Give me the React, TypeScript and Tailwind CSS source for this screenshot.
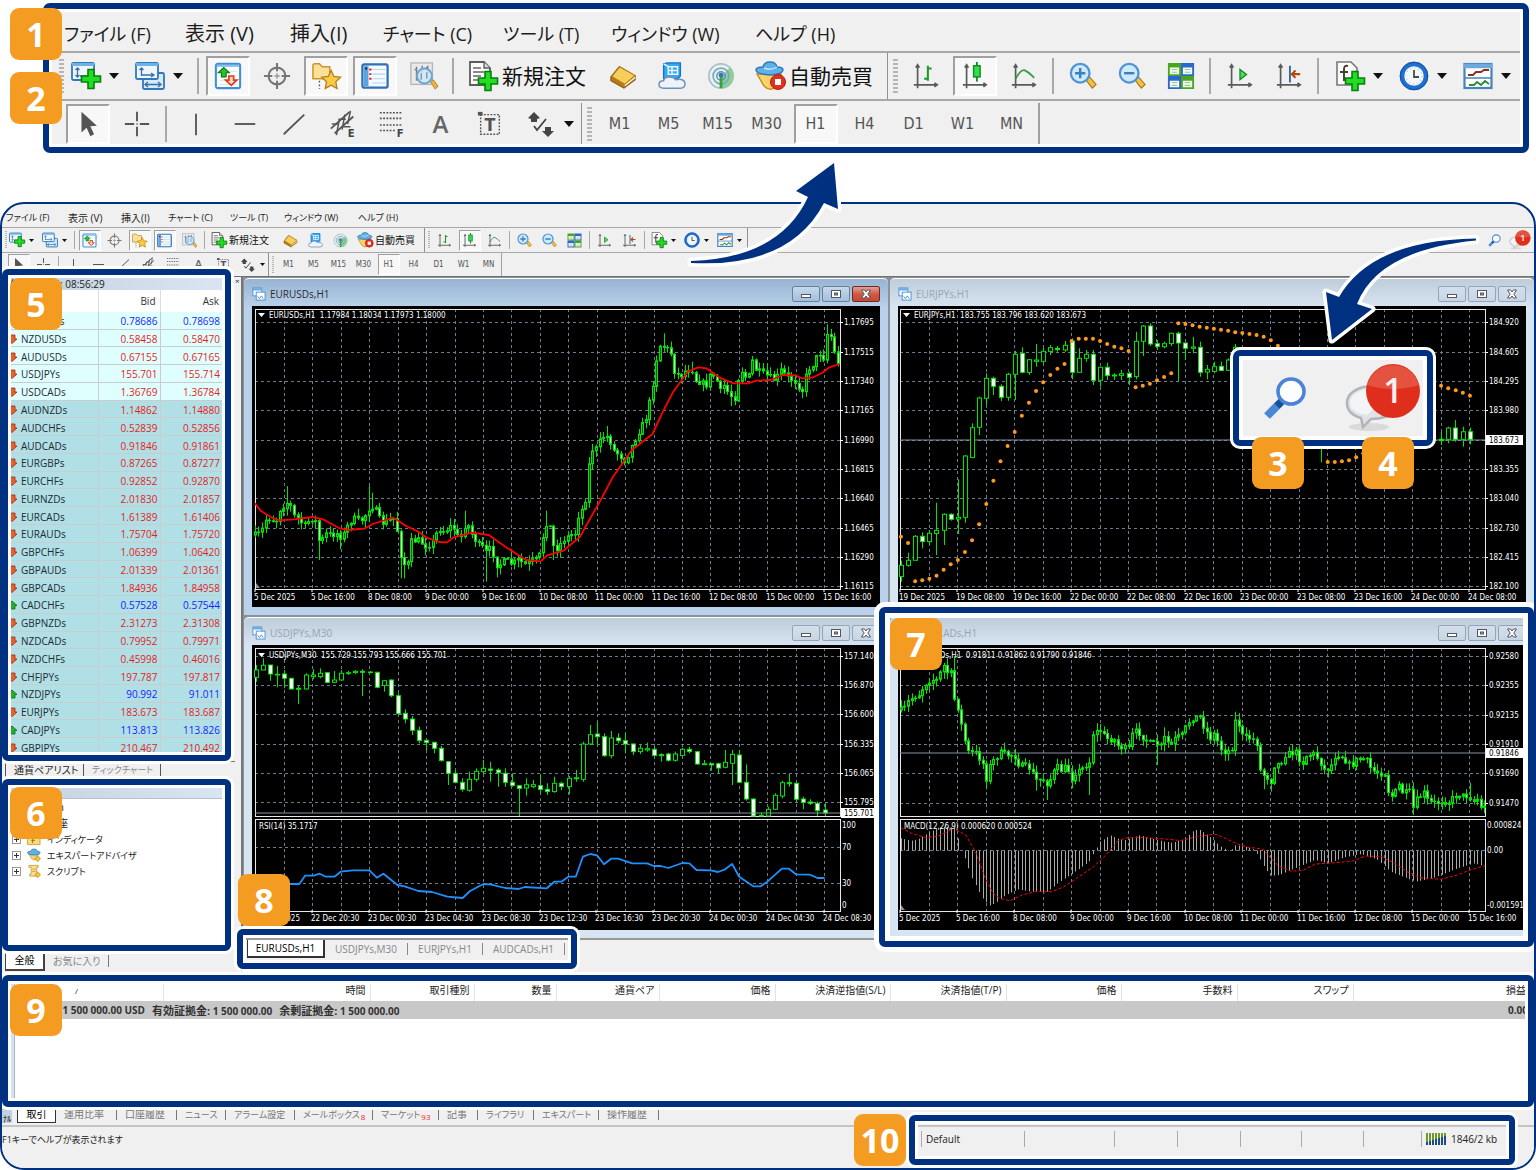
import React from "react";

type Size = "lg" | "sm";
type Pt = [number, number];

/* ------------------------------------------------------------------ */
/* Toolbar icons, drawn on a 30 x 30 grid                              */
/* ------------------------------------------------------------------ */

function Plus({ x, y }: { x: number; y: number }) {
  return (
    <path
      transform={`translate(${x} ${y})`}
      d="M-3-9.500h6v6.500h6.500v6h-6.500v6.500h-6v-6.500h-6.500v-6h6.500z"
      fill="#22dd22"
      stroke="#0a7d12"
      strokeWidth="1.600"
    />
  );
}

function Axes() {
  return <path d="M6 3v25M2 24.500h25M4 6l2-3 2 3M24 22.500l3 2-3 2" fill="none" stroke="#5a5a5a" strokeWidth="1.800" />;
}

function Lens({ sign }: { sign: "plus" | "minus" }) {
  return (
    <g>
      <path d="M18 19l4-3 7 8-4 4z" fill="#f3c23c" stroke="#a8751a" strokeWidth="1.200" />
      <circle cx="12" cy="12" r="10" fill="#cfeafc" stroke="#4f94d4" strokeWidth="2.400" />
      <path d={sign === "plus" ? "M12 6.500v11M6.500 12h11" : "M6.500 12h11"} stroke="#3c7fc0" strokeWidth="2.600" />
    </g>
  );
}

const ICONS: Record<string, React.ReactNode> = {
  newChart: (
    <g>
      <rect x="1" y="2" width="22" height="17" rx="1.500" fill="#eef6fd" stroke="#2f79bd" strokeWidth="1.800" />
      <path d="M1 3.500h22" stroke="#6fb0e6" strokeWidth="3" />
      <path d="M6.500 7v9M4.500 9l2-2 2 2M4.500 14l2 2 2-2M9 15h7" fill="none" stroke="#3b6ea5" strokeWidth="1.300" />
      <Plus x={20} y={18} />
    </g>
  ),
  profiles: (
    <g>
      <rect x="8" y="12" width="21" height="16" rx="1.500" fill="#d6eafa" stroke="#2f79bd" strokeWidth="1.800" />
      <path d="M10 23.500h15M13 21l-3 2.500 3 2.500M23 21l3 2.500-3 2.500" fill="none" stroke="#3b6ea5" strokeWidth="1.300" />
      <rect x="1" y="2" width="22" height="16" rx="1.500" fill="#eef6fd" stroke="#2f79bd" strokeWidth="1.800" />
      <path d="M1 3.500h22" stroke="#6fb0e6" strokeWidth="3" />
      <path d="M6.500 7v8M4.500 9l2-2 2 2M6.500 14h12M16 12l3 2-3 2" fill="none" stroke="#3b6ea5" strokeWidth="1.300" />
    </g>
  ),
  watch: (
    <g>
      <rect x="2" y="2" width="26" height="26" rx="2" fill="#fafdff" stroke="#3f8fd6" strokeWidth="2.200" />
      <path d="M3 4h24" stroke="#86c0ee" strokeWidth="2.500" />
      <path d="M6 10h18M6 15h18M6 20h18M6 24h18" stroke="#d4e1ea" strokeWidth="1" />
      <path d="M10.500 6l6 5.500h-3.500v4.500h-5v-4.500H4.500z" fill="#2bbf2b" stroke="#0d7a17" strokeWidth="1.200" />
      <path d="M18.500 25l6-5.500H21V15h-5v4.500h-3.500z" fill="#ffd9cf" stroke="#e03a1a" strokeWidth="1.800" />
    </g>
  ),
  crosshair: (
    <g fill="none" stroke="#767676" strokeWidth="2.200">
      <circle cx="15" cy="15" r="9" />
      <path d="M15 1v9M15 20v9M1 15h9M20 15h9" />
      <path d="M12 15h6M15 12v6" strokeWidth="1" />
    </g>
  ),
  navigator: (
    <g>
      <path d="M1 4q0-2 2-2h5l3 3h8v13H1z" fill="#fbe09a" stroke="#c9952c" strokeWidth="1.600" />
      <path d="M8 20v9" stroke="#555" strokeWidth="1.500" strokeDasharray="2 2" />
      <path d="M20.500 9l3 6.500 7 .8-5 5 1.300 7-6.300-3.500-6.300 3.500 1.300-7-5-5 7-.8z" fill="#f9cb45" stroke="#b47e1c" strokeWidth="1.400" />
    </g>
  ),
  terminal: (
    <g>
      <rect x="1.500" y="2.500" width="27" height="25" rx="2" fill="#f4faff" stroke="#2f6fb5" strokeWidth="2.400" />
      <path d="M3 4h5v22H3z" fill="#5ba2e0" />
      <path d="M12 8h14M12 13h14M12 18h14M12 22.500h14" stroke="#b8d3ea" strokeWidth="1.200" />
      <path d="M10 7v2M10 12v2M10 17v2" stroke="#e02020" strokeWidth="2.400" />
      <path d="M4.500 7h2" stroke="#111" strokeWidth="2" />
    </g>
  ),
  tester: (
    <g>
      <rect x="1" y="1" width="23" height="23" fill="#e9e9e9" stroke="#b5b5b5" strokeWidth="1.400" />
      <path d="M7 5v15M5 8h2M13 4v8M19 4v8M17 6h2" stroke="#777" strokeWidth="1.500" fill="none" />
      <path d="M22 21l3-2 5 7-3 3z" fill="#eeb73a" stroke="#b5782a" />
      <circle cx="15.500" cy="15" r="8" fill="#cfe7f8d9" stroke="#6ba6d6" strokeWidth="2.200" />
      <path d="M12 12v7M18 11v7" stroke="#7d94a8" strokeWidth="1.500" />
    </g>
  ),
  order: (
    <g>
      <path d="M2 1h14l6 6v17H2z" fill="#fdfdfd" stroke="#5c5c5c" strokeWidth="1.800" />
      <path d="M16 1v6h6" fill="#ddd" stroke="#5c5c5c" strokeWidth="1.400" />
      <path d="M5 7h8M5 11h11M5 15h8M5 19h6" stroke="#666" strokeWidth="1.600" />
      <Plus x={20} y={20} />
    </g>
  ),
  book: (
    <g>
      <path d="M2 16l9-11 17 10v4l-12 9L2 20z" fill="#b9791b" stroke="#8d5a12" strokeWidth="1.200" />
      <path d="M3 15.500L11.500 5 28 14.500 17 24z" fill="#f6cf5a" stroke="#b17a1d" strokeWidth="1.200" />
      <path d="M17 25.500l11-9" stroke="#fff3cc" strokeWidth="1.500" />
    </g>
  ),
  cloud: (
    <g>
      <path d="M6 2l4-1h14v14l-3 3H6z" fill="#35a7f3" stroke="#1572c4" strokeWidth="1.400" />
      <path d="M11 5h10v8H11zM15 5v8M11 9h10M6 2l5 3" fill="none" stroke="#e8f6ff" strokeWidth="1.600" />
      <path d="M6 28q-5 0-5-4t5-4q1-4 6-4 5 0 7 3 9-2 10 4 0 5-5 5z" fill="#eef3fa" stroke="#7590b5" strokeWidth="1.600" />
    </g>
  ),
  signal: (
    <g>
      <circle cx="15" cy="15" r="13" fill="#eaf2ee" stroke="#a9bfca" strokeWidth="1.800" />
      <path d="M15 15L25 6a13 13 0 0 1-9 22z" fill="#8fce95" />
      <circle cx="15" cy="15" r="8.500" fill="none" stroke="#7ba7c4" strokeWidth="1.800" />
      <circle cx="15" cy="15" r="4.500" fill="none" stroke="#5c93bd" strokeWidth="1.600" />
      <path d="M15 15v13" stroke="#35a23c" strokeWidth="3" />
      <circle cx="15" cy="14" r="2.600" fill="#3673b8" />
    </g>
  ),
  expert: (
    <g>
      <path d="M2 13h24l-5 13q-6 5-12-1z" fill="#f7d368" stroke="#c08d24" strokeWidth="1.400" />
      <path d="M1 9q0-3 7-3 1-5 7-5t7 5q6 0 6 3 0 4-13 5Q1 13 1 9z" fill="#5fb0e8" stroke="#2a78b8" strokeWidth="1.400" />
      <path d="M9 7q6 3 13-1" fill="none" stroke="#c7e6fa" strokeWidth="1.400" />
      <circle cx="23" cy="21" r="7.500" fill="#e0301e" stroke="#b71f10" />
      <rect x="20" y="18" width="6" height="6" fill="#fff" />
    </g>
  ),
  advisor: (
    <g>
      <path d="M4 13h20l-5 11q-5 3-9-1z" fill="#f7d368" stroke="#c08d24" strokeWidth="1.400" />
      <path d="M1 10q0-3 7-3 1-5 7-5t7 5q6 0 6 3 0 5-13 5T1 10z" fill="#5fb0e8" stroke="#2a78b8" strokeWidth="1.600" />
      <path d="M23 17l6 6-6 6-6-6z" fill="#f5c53f" stroke="#b88319" strokeWidth="1.600" />
    </g>
  ),
  bars: (
    <g>
      <Axes />
      <path d="M17 4v16M13 18h4M17 7h4" stroke="#1c9a2a" strokeWidth="2.200" fill="none" />
    </g>
  ),
  candles: (
    <g>
      <Axes />
      <path d="M17 0v21" stroke="#128a1f" strokeWidth="2" />
      <rect x="13.500" y="4" width="7" height="12" fill="#2fe04a" stroke="#128a1f" strokeWidth="1.500" />
    </g>
  ),
  line: (
    <g>
      <Axes />
      <path d="M6 18q6-11 10-9t10 8" stroke="#3a9e46" strokeWidth="1.900" fill="none" />
    </g>
  ),
  zoomIn: <Lens sign="plus" />,
  zoomOut: <Lens sign="minus" />,
  tiles: (
    <g>
      <path d="M1 1h14v14H1zM15 15h14v14H15z" fill="#4aa51f" />
      <path d="M15 1h14v14H15zM1 15h14v14H1z" fill="#2c66cf" />
      <path d="M3 6h10v7H3zM17 6h10v7H17zM3 20h10v7H3zM17 20h10v7H17z" fill="#f3fbf0" />
      <path d="M5 8h6M5 11h6M19 8h6M19 11h6M5 22h6M5 25h6M19 22h6M19 25h6" stroke="#9cc59a" strokeWidth="1.200" />
    </g>
  ),
  scroll: (
    <g>
      <Axes />
      <path d="M15 8l7 5.500-7 5.500z" fill="#4fdc5b" stroke="#128a1f" strokeWidth="1.400" />
    </g>
  ),
  shift: (
    <g>
      <Axes />
      <path d="M16 4v18" stroke="#2e67a8" strokeWidth="2" />
      <path d="M27 13h-8M22 9l-4 4 4 4" stroke="#b5470f" strokeWidth="2.200" fill="none" />
    </g>
  ),
  indicator: (
    <g>
      <path d="M2 1h14l6 6v17H2z" fill="#fdfdfd" stroke="#777" strokeWidth="1.600" />
      <path d="M13 5q-4-1-4 3v12M5 11h8" stroke="#4a3a30" strokeWidth="1.900" fill="none" />
      <Plus x={20} y={20} />
    </g>
  ),
  clock: (
    <g>
      <circle cx="15" cy="15" r="12" fill="#f1f7fb" stroke="#1d6fd0" strokeWidth="4.500" />
      <circle cx="15" cy="15" r="13.800" fill="none" stroke="#12509c" strokeWidth="1" />
      <circle cx="15" cy="15" r="8" fill="none" stroke="#b9c6d0" strokeWidth="1.200" strokeDasharray="1 3.200" />
      <path d="M15 9v7h5" stroke="#4a4a4a" strokeWidth="1.800" fill="none" />
    </g>
  ),
  template: (
    <g>
      <rect x="1.500" y="3" width="27" height="24" fill="#fff" stroke="#4583bd" strokeWidth="2.200" />
      <path d="M1 5h28" stroke="#6ea9dc" strokeWidth="4.500" />
      <path d="M1.500 17h27" stroke="#4583bd" strokeWidth="1.500" />
      <path d="M5 14h5l3-3h5l3-2h5" stroke="#8e2f1d" strokeWidth="1.900" fill="none" />
      <path d="M6 24h5l3-3 4 3 4-4 4 3" stroke="#2f8b3a" strokeWidth="1.900" fill="none" />
    </g>
  ),
  cursor: <path d="M8 2v22l5.500-5 4 9 4-2-4-8.500 7-.5z" fill="#555" />,
  cross: <path d="M15 2v10M15 18v10M2 15h10M18 15h10M14.500 15h1" stroke="#555" strokeWidth="2" />,
  vline: <path d="M15 4v23" stroke="#555" strokeWidth="2" />,
  hline: <path d="M4 15h22" stroke="#555" strokeWidth="2" />,
  trend: <path d="M4 26L26 5" stroke="#555" strokeWidth="2" />,
  channel: (
    <g>
      <path d="M2 20L22 2M6 25L26 7" stroke="#555" strokeWidth="2" />
      <path d="M8 27l3-17M14 21l3-16M20 15l3-14M3 15h8M10 10h8M14 18h9" stroke="#555" strokeWidth="1.600" />
      <text x="20" y="29" fontSize="12" fontWeight="700" fill="#444">E</text>
    </g>
  ),
  fibo: (
    <g>
      <path d="M2 3h24M2 9h24M2 16h24M2 22h16" stroke="#555" strokeWidth="1.700" strokeDasharray="2 1.500" />
      <text x="20" y="29" fontSize="12" fontWeight="700" fill="#444">F</text>
    </g>
  ),
  label: (
    <g>
      <rect x="5" y="5" width="20" height="21" fill="none" stroke="#555" strokeWidth="1.500" strokeDasharray="2 1.500" />
      <path d="M2 2h5v4H2z" fill="#555" />
      <text x="15" y="22" fontSize="19" fontWeight="700" fill="#555" textAnchor="middle">T</text>
    </g>
  ),
  shapes: (
    <g>
      <path d="M8 3l6 6-3 1v3H5v-3L2 9z" fill="#444" />
      <path d="M22 28l-6-6h3v-4h6v4h3z" fill="#444" />
      <path d="M8 17l3 4 9-11" stroke="#444" strokeWidth="1.800" fill="none" />
    </g>
  ),
  chartDoc: (
    <g>
      <rect x="2" y="2" width="19" height="17" fill="#fff" stroke="#4b8fd0" strokeWidth="2" />
      <path d="M2 5h19" stroke="#6aaae4" strokeWidth="5" />
      <rect x="9" y="11" width="19" height="17" fill="#fff" stroke="#4b8fd0" strokeWidth="2" />
      <path d="M12 20l4 5 4-6 4 6" stroke="#4b8fd0" strokeWidth="2" fill="none" />
    </g>
  ),
  script: (
    <g>
      <path d="M4 3h20v4h-3v14h3v5H6v-5h3V7H4z" fill="#fbe092" stroke="#c0922f" strokeWidth="1.600" />
      <path d="M11 11h8M11 16h8" stroke="#c0922f" strokeWidth="1.500" />
      <path d="M23 17l6 6-6 6-6-6z" fill="#f5c53f" stroke="#b88319" strokeWidth="1.600" />
    </g>
  ),
  folder: (
    <g>
      <path d="M1 6h11l3 4h13v17H1z" fill="#f9dc7a" stroke="#c0922f" strokeWidth="1.600" />
      <path d="M16 12q-4 0-4 5v7M9 18h8" stroke="#8b6410" strokeWidth="1.800" fill="none" />
    </g>
  ),
};

function Icon({ name, className }: { name: string; className: string }) {
  return (
    <svg viewBox="0 0 30 30" aria-hidden="true" className={`overflow-visible ${className}`}>
      {ICONS[name]}
    </svg>
  );
}

/* ------------------------------------------------------------------ */
/* Menu bar and tool bars, in a normal and a magnified size            */
/* ------------------------------------------------------------------ */

const MENU: { label: string; lg: string; sm: string }[] = [
  { label: "ファイル (F)", lg: "w-[121px] text-[18px]", sm: "w-[62px] text-[9px]" },
  { label: "表示 (V)", lg: "w-[105px] text-[20px]", sm: "w-[53px] text-[10px]" },
  { label: "挿入(I)", lg: "w-[93px] text-[20px]", sm: "w-[47px] text-[10px]" },
  { label: "チャート (C)", lg: "w-[120px] text-[18px]", sm: "w-[62px] text-[9px]" },
  { label: "ツール (T)", lg: "w-[108px] text-[18px]", sm: "w-[54px] text-[9px]" },
  { label: "ウィンドウ (W)", lg: "w-[144px] text-[18px]", sm: "w-[74px] text-[9px]" },
  { label: "ヘルプ (H)", lg: "w-[120px] text-[18px]", sm: "w-[60px] text-[9px]" },
];

function MenuBar({ size }: { size: Size }) {
  const lg = size === "lg";
  return (
    <nav
      className={
        lg
          ? "flex h-[41px] items-center border-b-2 border-[#a8a8a8] pt-1 pl-3"
          : "flex h-6 items-center border-b border-[#a8a8a8] pt-1 pl-1"
      }
    >
      {MENU.map((m) => (
        <button key={m.label} className={`shrink-0 text-left leading-none whitespace-nowrap text-[#1c1c1c] ${lg ? m.lg : m.sm}`}>
          {m.label}
        </button>
      ))}
    </nav>
  );
}

function Tool({ size, icon, label, pressed }: { size: Size; icon?: string; label: string; pressed?: boolean }) {
  const lg = size === "lg";
  const face = pressed ? "border-[#a0a0a0] border-r-white border-b-white bg-[#f8f8f8]" : "border-transparent";
  return (
    <div className={lg ? "flex w-[49px] shrink-0 justify-center" : "flex w-[25px] shrink-0 justify-center"}>
      <button
        aria-label={label}
        aria-pressed={pressed}
        className={`flex items-center justify-center font-['DejaVu_Sans_Condensed','Open_Sans',sans-serif] text-[#555] ${face} ${
          lg ? "h-[40px] w-[44px] border-2 text-[16px]" : "h-[21px] w-[22px] border text-[8px]"
        }`}
      >
        {icon ? <Icon name={icon} className={lg ? "size-7" : "size-[15px]"} /> : <span className="leading-none">{label}</span>}
      </button>
    </div>
  );
}

function Caret({ size }: { size: Size }) {
  return (
    <svg viewBox="0 0 10 6" aria-hidden="true" className={size === "lg" ? "h-[6px] w-[10px] shrink-0" : "h-[3px] w-[5px] shrink-0"}>
      <path d="M0 0h10L5 6z" fill="#111" />
    </svg>
  );
}

function DropTool({ size, icon, label, tight }: { size: Size; icon: string; label: string; tight?: boolean }) {
  const lg = size === "lg";
  const width = lg ? (tight ? "w-[58px]" : "w-[64px]") : tight ? "w-[30px]" : "w-[33px]";
  return (
    <button aria-label={label} className={`flex shrink-0 items-center ${lg ? "gap-2" : "gap-1"} ${width}`}>
      <Icon name={icon} className={lg ? "size-[30px] shrink-0" : "size-4 shrink-0"} />
      <Caret size={size} />
    </button>
  );
}

function TextTool({ size, icon, label }: { size: Size; icon: string; label: string }) {
  const lg = size === "lg";
  return (
    <button
      className={
        lg
          ? "flex w-[140px] shrink-0 items-center gap-1 pl-[10px] text-[21px] whitespace-nowrap"
          : "flex w-[71px] shrink-0 items-center gap-[2px] pl-1 text-[10px] whitespace-nowrap"
      }
    >
      <Icon name={icon} className={lg ? "size-[30px] shrink-0" : "size-4 shrink-0"} />
      <span className="leading-none text-[#111]">{label}</span>
    </button>
  );
}

function Divider({ size }: { size: Size }) {
  return (
    <div className={size === "lg" ? "flex w-[10px] shrink-0 justify-center" : "flex w-[5px] shrink-0 justify-center"}>
      <div className={size === "lg" ? "h-[36px] w-[2px] bg-[#a8a8a8]" : "h-[18px] w-px bg-[#a8a8a8]"} />
    </div>
  );
}

function Grip({ size, edge }: { size: Size; edge?: boolean }) {
  const lg = size === "lg";
  return (
    <div
      className={`flex shrink-0 items-center self-stretch ${edge ? "border-l border-[#909090]" : ""} ${
        lg ? "ml-[2px] w-[14px] pl-[5px]" : "w-2 pl-[3px]"
      }`}
    >
      <div
        className={
          lg
            ? "h-[34px] w-[5px] bg-[repeating-linear-gradient(#b5b5b5_0_2px,#f0f0f0_2px_4px)]"
            : "h-[18px] w-[2px] bg-[repeating-linear-gradient(#b5b5b5_0_1px,#f0f0f0_1px_2px)]"
        }
      />
    </div>
  );
}

const FRAMES = ["M1", "M5", "M15", "M30", "H1", "H4", "D1", "W1", "MN"];

function ToolBars({ size, children }: { size: Size; children?: React.ReactNode }) {
  const lg = size === "lg";
  const s = size;
  return (
    <>
      <div
        className={`flex items-center overflow-hidden border-[#a8a8a8] bg-[#f0f0f0] ${
          lg ? "h-[48px] border-b-2" : "h-[25px] border-b"
        }`}
      >
        <div className={lg ? "w-[19px] shrink-0" : "w-[7px] shrink-0"}>
          <Grip size={s} />
        </div>
        <DropTool size={s} icon="newChart" label="新規チャート" />
        <DropTool size={s} icon="profiles" label="プロファイル" tight />
        <Divider size={s} />
        <Tool size={s} icon="watch" label="気配値" pressed />
        <Tool size={s} icon="crosshair" label="データウィンドウ" />
        <Tool size={s} icon="navigator" label="ナビゲーター" pressed />
        <Tool size={s} icon="terminal" label="ターミナル" pressed />
        <Tool size={s} icon="tester" label="ストラテジーテスター" />
        <Divider size={s} />
        <TextTool size={s} icon="order" label="新規注文" />
        <Tool size={s} icon="book" label="メタエディター" />
        <Tool size={s} icon="cloud" label="クラウド" />
        <Tool size={s} icon="signal" label="シグナル" />
        <TextTool size={s} icon="expert" label="自動売買" />
        <Grip size={s} edge />
        <Tool size={s} icon="bars" label="バーチャート" />
        <Tool size={s} icon="candles" label="ローソク足" pressed />
        <Tool size={s} icon="line" label="ラインチャート" />
        <Divider size={s} />
        <Tool size={s} icon="zoomIn" label="拡大" />
        <Tool size={s} icon="zoomOut" label="縮小" />
        <Tool size={s} icon="tiles" label="整列" />
        <Divider size={s} />
        <Tool size={s} icon="scroll" label="自動スクロール" />
        <Tool size={s} icon="shift" label="チャートシフト" />
        <Divider size={s} />
        <div className={lg ? "flex shrink-0 pl-3" : "flex shrink-0 border-r border-[#909090] py-1 pl-1"}>
          <DropTool size={s} icon="indicator" label="インディケータリスト" />
          <DropTool size={s} icon="clock" label="時間足設定" />
          <DropTool size={s} icon="template" label="定型チャート" tight />
        </div>
        {children}
      </div>
      <div className={`flex items-center overflow-hidden bg-[#f0f0f0] ${lg ? "h-[43px] pt-[2px]" : "h-6 border-b border-[#707070]"}`}>
        <div className={lg ? "w-[11px] shrink-0" : "w-1 shrink-0"} />
        <Tool size={s} icon="cursor" label="カーソル" pressed />
        <Tool size={s} icon="cross" label="クロスヘア" />
        <Divider size={s} />
        <Tool size={s} icon="vline" label="垂直線" />
        <Tool size={s} icon="hline" label="水平線" />
        <Tool size={s} icon="trend" label="トレンドライン" />
        <Tool size={s} icon="channel" label="チャネル" />
        <Tool size={s} icon="fibo" label="フィボナッチ" />
        <div className={lg ? "w-[49px] shrink-0 text-center text-[24px]" : "w-[25px] shrink-0 text-center text-[12px]"}>
          <button className="leading-none font-semibold text-[#666]">A</button>
        </div>
        <Tool size={s} icon="label" label="テキストラベル" />
        <div className={lg ? "flex w-[65px] shrink-0 pl-3" : "flex w-8 shrink-0 pl-1"}>
          <DropTool size={s} icon="shapes" label="矢印" tight />
        </div>
        <Grip size={s} edge />
        {FRAMES.map((f) => (
          <Tool key={f} size={s} label={f} pressed={f === "H1"} />
        ))}
        <div className={lg ? "w-1 self-stretch border-r-2 border-[#a0a0a0]" : "w-px self-stretch border-r border-[#a0a0a0]"} />
      </div>
    </>
  );
}

function SearchIcon({ className }: { className: string }) {
  return (
    <svg viewBox="0 0 44 44" aria-hidden="true" className={className}>
      <path d="M19 25L4 40" stroke="#4a86d6" strokeWidth="8" />
      <path d="M21 23l-7 7" stroke="#174f9c" strokeWidth="7" />
      <ellipse cx="28" cy="15.500" rx="13" ry="12.500" fill="#fcfdff" stroke="#4a83d8" strokeWidth="3.600" />
    </svg>
  );
}

function ChatIcon({ className }: { className: string }) {
  return (
    <svg viewBox="0 0 76 70" aria-hidden="true" className={className}>
      <ellipse cx="24" cy="64" rx="20" ry="4" fill="#dadada" />
      <path d="M18 24q18-2 32 10v14q-8 8-24 8l-8 8-2-9Q2 51 2 40t16-16z" fill="#dfe2e7" stroke="#b2b4b8" strokeWidth="2.500" />
      <path d="M18 27q8-1 16 3 0 12-12 22Q5 49 5 40q0-9 13-13z" fill="#f3f4f6" />
      <circle cx="48" cy="28" r="27" fill="#df2f1c" />
      <path d="M22 22a27 27 0 0 1 52 0q-26 8-52 0z" fill="#ea6a58" opacity=".6" />
      <text x="48" y="40" textAnchor="middle" fontSize="34" fontWeight="600" fill="#fbeeee">1</text>
    </svg>
  );
}

/* ------------------------------------------------------------------ */
/* Annotations                                                         */
/* ------------------------------------------------------------------ */

function Badge({ n, className }: { n: number; className: string }) {
  return (
    <span
      className={`pointer-events-none absolute z-30 flex size-[52px] items-center justify-center rounded-[9px] bg-[#f49b22] text-[34px] leading-none font-bold text-white ${className}`}
    >
      {n}
    </span>
  );
}

function Highlight({ className }: { className: string }) {
  return (
    <div
      className={`pointer-events-none absolute z-20 rounded-[6px] border-[6px] border-[#003180] shadow-[0_0_0_3px_#fff,inset_0_0_0_3px_#fff] ${className}`}
    />
  );
}

/* ------------------------------------------------------------------ */
/* Charts                                                              */
/* ------------------------------------------------------------------ */

// Series are stored in plot units: 2.4 units per pixel across, 3 per pixel down.
const scale = (x0: number, kx: number, y0: number) => ({
  x: (v: number) => x0 + v / kx,
  y: (v: number) => y0 + v / 3,
});
type Scale = ReturnType<typeof scale>;

const lerp = (pts: Pt[], x: number) => {
  for (let i = 1; i < pts.length; i++) {
    if (x <= pts[i][0]) {
      const [ax, ay] = pts[i - 1];
      const [bx, by] = pts[i];
      return ay + ((by - ay) * (x - ax)) / (bx - ax);
    }
  }
  return pts[pts.length - 1][1];
};

const pathOf = (pts: Pt[], s: Scale) => pts.map(([x, y], i) => `${i ? "L" : "M"}${s.x(x).toFixed(1)} ${s.y(y).toFixed(1)}`).join("");

// x, high, low, body top, body bottom, 1 = falling
type Bar = [number, number, number, number, number, number];

function denseBars(pts: Pt[], step: number, spikes: Pt[]): Bar[] {
  let seed = 7;
  const rnd = () => {
    seed = (seed * 16807) % 2147483647;
    return seed / 2147483647;
  };
  const out: Bar[] = [];
  const start = pts[0][0];
  const end = pts[pts.length - 1][0];
  let prev = pts[0][1];
  for (let x = start; x <= end + 1; x += step) {
    const close = lerp(pts, x) + (rnd() - 0.5) * 18;
    const top = Math.min(prev, close);
    const bottom = Math.max(prev, close);
    let high = top - rnd() * 20 - 2;
    let low = bottom + rnd() * 20 + 2;
    for (const [px, py] of spikes) {
      if (Math.abs(px - x) <= step / 2) {
        high = Math.min(high, py);
        low = Math.max(low, py);
      }
    }
    out.push([x, high, low, top, bottom, close > prev ? 1 : 0]);
    prev = close;
  }
  return out;
}

function Candles({ bars, s, dense }: { bars: Bar[]; s: Scale; dense?: boolean }) {
  const w = dense ? 2 : 4;
  return (
    <g stroke="#00e600" strokeWidth="1">
      {bars.map(([x, h, l, t, b, down], i) => {
        const cx = Math.round(s.x(x)) + 0.5;
        return (
          <g key={i}>
            <path d={`M${cx} ${s.y(h).toFixed(1)}V${s.y(l).toFixed(1)}`} />
            <rect
              x={cx - w / 2}
              y={s.y(t).toFixed(1)}
              width={w}
              height={Math.max(0.6, (b - t) / 3).toFixed(1)}
              fill={down ? (dense ? "#b8ffb8" : "#ffffff") : dense ? "#005a00" : "#000000"}
            />
          </g>
        );
      })}
    </g>
  );
}

interface Pane {
  left: number;
  top: number;
  bottom: number;
  lines: number[];
}

function Grid({ pane, ticks = true }: { pane: Pane; ticks?: boolean }) {
  const { left, top, bottom, lines } = pane;
  const right = left + 585;
  return (
    <g shapeRendering="crispEdges">
      <g stroke="#6b7c8d" strokeWidth="1" strokeDasharray="3 3">
        {Array.from({ length: 20 }, (_, k) => {
          const x = Math.round(left + 29 + k * 28.43);
          return <path key={k} d={`M${x} ${top}V${bottom}`} />;
        })}
        {lines.map((y) => (
          <path key={y} d={`M${left} ${Math.round(y)}H${right}`} />
        ))}
      </g>
      <rect x={left} y={top} width={right - left} height={bottom - top} fill="none" stroke="#e8e8e8" />
      {ticks && lines.map((y) => <path key={y} d={`M${right} ${Math.round(y)}h3`} stroke="#fff" />)}
    </g>
  );
}

const LABEL = "fill-white font-['DejaVu_Sans_Condensed','Open_Sans',sans-serif] text-[8px]";

function AxisLabels({ left, ys, labels }: { left: number; ys: number[]; labels: string[] }) {
  return (
    <g className={LABEL}>
      {labels.map((l, i) => (
        <text key={l} x={left + 589} y={ys[i] + 3}>
          {l}
        </text>
      ))}
    </g>
  );
}

function TimeLabels({ left, y, labels }: { left: number; y: number; labels: string[] }) {
  return (
    <g className={LABEL}>
      {labels.map((l, i) => (
        <g key={l}>
          <path d={`M${Math.round(left + i * 56.9)} ${y - 9}v3`} stroke="#fff" />
          <text x={Math.round(left - 1 + i * 56.9)} y={y + 2}>
            {l}
          </text>
        </g>
      ))}
    </g>
  );
}

function PriceTag({ left, y, label }: { left: number; y: number; label: string }) {
  return (
    <g>
      <path d={`M${left} ${y}H${left + 585}`} stroke="#8593a3" />
      <rect x={left + 586} y={y - 5} width="37" height="10" fill="#fff" />
      <text x={left + 589} y={y + 3} className="fill-black font-['DejaVu_Sans_Condensed','Open_Sans',sans-serif] text-[8px]">
        {label}
      </text>
    </g>
  );
}

function Caption({ left, y, name, values }: { left: number; y: number; name: string; values: string }) {
  return (
    <g>
      <path d={`M${left + 3} ${y - 2}h7l-3.500 4z`} fill="#fff" />
      <text x={left + 14} y={y + 3} className={LABEL} xmlSpace="preserve">
        {`${name}  ${values}`}
      </text>
    </g>
  );
}

const rows = (from: number, n: number) => Array.from({ length: n }, (_, i) => from + i * 29.33);

const sEurusd = scale(240, 2.412, 270);
const EURUSD_CLOSE: Pt[] = [[36,795],[50,790],[60,750],[75,745],[85,760],[97,715],[110,705],[118,690],[127,735],[140,745],[155,770],[170,745],[182,755],[193,830],[203,790],[220,795],[235,790],[245,805],[262,760],[275,745],[290,755],[302,735],[315,705],[330,725],[340,760],[355,755],[370,745],[382,795],[390,885],[405,880],[410,815],[430,810],[450,830],[465,815],[478,775],[492,785],[512,765],[525,800],[535,800],[545,750],[555,785],[575,825],[590,835],[597,860],[605,820],[615,885],[625,885],[640,870],[655,882],[670,870],[690,885],[700,875],[720,865],[735,770],[745,745],[752,825],[765,835],[780,810],[795,795],[808,790],[820,710],[830,730],[838,620],[846,540],[860,535],[872,500],[888,500],[900,540],[915,555],[930,575],[940,540],[955,500],[968,470],[982,435],[993,355],[1000,320],[1008,225],[1022,230],[1038,245],[1045,300],[1060,320],[1075,300],[1090,300],[1098,330],[1125,345],[1135,310],[1148,325],[1158,365],[1168,345],[1180,375],[1195,385],[1205,295],[1218,315],[1222,350],[1235,270],[1245,300],[1260,310],[1290,330],[1305,300],[1318,320],[1340,335],[1355,365],[1368,300],[1385,280],[1395,245],[1408,265],[1413,190],[1425,200],[1435,260],[1444,285]];
const EURUSD_SPIKES: Pt[] = [[115,648],[312,648],[322,668],[545,722],[741,722],[887,468],[1022,190],[1418,163],[1090,275],[1238,258],[193,870],[245,838],[390,925],[398,925],[596,935],[620,922],[1187,408],[760,870]];
const EURUSD_MA: Pt[] = [[36,700],[50,722],[75,742],[95,751],[130,748],[175,741],[200,748],[240,775],[260,780],[300,776],[320,762],[370,743],[400,767],[430,785],[450,803],[480,816],[500,817],[515,802],[560,788],[600,795],[640,830],[690,870],[725,874],[740,857],[780,842],[820,800],[845,745],[870,690],[900,620],[945,540],[995,492],[1020,425],[1045,365],[1080,305],[1105,292],[1125,295],[1155,322],[1190,340],[1225,340],[1245,332],[1280,330],[1310,315],[1340,316],[1355,325],[1380,323],[1405,308],[1420,293],[1446,282]];

function EurUsdChart() {
  const left = 255;
  const lines = rows(322.3, 10);
  return (
    <svg viewBox="252 306 628 301" className="block w-full bg-black" role="img" aria-label="EURUSDs H1">
      <Grid pane={{ left, top: 309, bottom: 589, lines }} />
      <Candles bars={denseBars(EURUSD_CLOSE, 8.57, EURUSD_SPIKES)} s={sEurusd} dense />
      <path d={pathOf(EURUSD_MA, sEurusd)} fill="none" stroke="#f00" strokeWidth="1.800" strokeLinejoin="round" />
      <path d="M256 583l4 5h-4z" fill="#8593a3" />
      <Caption left={left} y={315} name="EURUSDs,H1" values="1.17984 1.18034 1.17973 1.18000" />
      <AxisLabels left={left} ys={lines} labels={["1.17695", "1.17515", "1.17340", "1.17165", "1.16990", "1.16815", "1.16640", "1.16465", "1.16290", "1.16115"]} />
      <TimeLabels left={left} y={598} labels={["5 Dec 2025", "5 Dec 16:00", "8 Dec 08:00", "9 Dec 00:00", "9 Dec 16:00", "10 Dec 08:00", "11 Dec 00:00", "11 Dec 16:00", "12 Dec 08:00", "15 Dec 00:00", "15 Dec 16:00"]} />
    </svg>
  );
}

// Each entry: high, low, body top, body bottom, 1 = falling
type Row5 = [number, number, number, number, number];
const USDJPY: Row5[] = [[165,215,180,202,0],[145,180,166,180,0],[165,212,165,192,1],[168,232,193,195,1],[180,235,192,205,1],[203,238,205,237,1],[228,282,235,238,0],[190,238,195,237,0],[178,208,195,200,0],[175,205,190,200,0],[187,220,188,217,1],[183,218,210,217,0],[180,212,190,210,0],[183,195,188,190,0],[180,192,184,188,0],[178,258,184,187,1],[183,190,186,187,0],[185,235,187,232,1],[210,245,212,226,0],[208,262,210,257,1],[250,315,257,311,1],[298,340,310,327,1],[318,375,327,361,1],[350,400,361,392,1],[388,420,391,398,1],[395,430,397,415,1],[408,455,415,452,1],[453,525,455,490,1],[480,520,490,517,1],[505,545,517,538,1],[485,545,508,541,0],[475,515,484,508,0],[450,490,475,485,0],[455,515,477,481,1],[475,530,480,488,1],[475,530,490,517,1],[490,530,517,527,1],[525,618,527,535,1],[505,557,524,534,0],[510,535,524,530,0],[495,550,527,538,1],[520,555,538,545,1],[500,548,520,545,0],[515,540,520,530,1],[498,553,505,530,0],[480,515,503,506,0],[395,515,402,508,0],[345,405,374,402,0],[335,405,372,380,1],[370,440,380,437,1],[363,445,384,437,0],[370,400,384,392,1],[370,430,392,402,1],[400,435,402,425,1],[405,432,415,425,0],[398,425,416,420,0],[410,438,418,437,1],[430,455,434,437,1],[428,455,432,451,1],[425,455,432,451,0],[413,437,418,437,0],[410,430,418,425,1],[423,465,425,462,1],[450,465,461,464,0],[460,482,461,465,1],[458,490,461,474,1],[420,475,457,472,0],[420,525,433,460,0],[420,517,435,517,1],[463,572,517,567,1],[565,618,567,618,1],[608,618,616,618,0],[590,618,598,618,0],[550,600,556,598,0],[512,565,518,558,0],[492,530,518,521,1],[517,577,520,568,1],[560,597,567,577,1],[568,585,576,580,1],[575,618,580,602,1],[580,618,600,609,1]];
const sUsdjpy = scale(240, 2.412, 610);
const RSI: Pt[] = [[40,830],[100,822],[143,822],[157,797],[178,797],[192,791],[207,800],[228,800],[243,785],[272,781],[312,781],[330,803],[346,791],[380,825],[397,829],[430,843],[463,846],[500,860],[537,864],[555,843],[587,822],[603,823],[640,834],[672,837],[687,831],[740,835],[758,815],[775,815],[792,800],[810,800],[827,740],[845,732],[861,736],[878,763],[895,746],[912,746],[946,760],[982,760],[998,768],[1015,768],[1033,774],[1067,759],[1084,760],[1101,780],[1135,781],[1153,786],[1170,778],[1187,762],[1204,800],[1238,829],[1256,829],[1272,815],[1307,776],[1324,776],[1341,793],[1375,794],[1393,804],[1410,804]];

function UsdJpyChart() {
  const left = 255;
  const lines = rows(655.7, 6);
  const bars = USDJPY.map((b, i): Bar => [38 + i * 17.15, ...b]);
  return (
    <svg viewBox="252 645 628 285" className="block w-full bg-black" role="img" aria-label="USDJPYs M30 RSI">
      <Grid pane={{ left, top: 648, bottom: 816, lines }} />
      <Grid pane={{ left, top: 819, bottom: 911, lines: [847, 883] }} ticks={false} />
      <Candles bars={bars} s={sUsdjpy} />
      <path d={pathOf(RSI, sUsdjpy)} fill="none" stroke="#1e90ff" strokeWidth="1.800" strokeLinejoin="round" />
      <Caption left={left} y={655} name="USDJPYs,M30" values="155.729 155.793 155.666 155.701" />
      <text x="259" y="829" className={LABEL}>RSI(14) 35.1717</text>
      <AxisLabels left={left} ys={lines} labels={["157.140", "156.870", "156.600", "156.335", "156.065", "155.795"]} />
      <PriceTag left={left} y={813} label="155.701" />
      <AxisLabels left={left - 2} ys={[825, 847, 883, 905]} labels={["100", "70", "30", "0"]} />
      <TimeLabels left={left} y={919} labels={["22 Dec 2025", "22 Dec 20:30", "23 Dec 00:30", "23 Dec 04:30", "23 Dec 08:30", "23 Dec 12:30", "23 Dec 16:30", "23 Dec 20:30", "24 Dec 00:30", "24 Dec 04:30", "24 Dec 08:30"]} />
    </svg>
  );
}

const EURJPY: Row5[] = [[872,935,886,920,0],[848,890,871,886,0],[795,872,799,871,0],[787,835,799,815,1],[780,825,790,815,0],[698,855,781,791,0],[730,825,733,781,0],[730,752,733,748,1],[628,792,742,747,0],[555,758,558,742,0],[460,565,473,562,0],[380,495,384,472,0],[310,405,325,385,0],[320,375,325,349,1],[343,393,349,382,1],[308,392,313,382,0],[243,390,253,313,0],[232,310,250,307,1],[267,315,269,307,0],[222,290,270,274,0],[233,280,244,274,0],[225,255,233,244,0],[228,245,235,239,1],[213,245,226,240,0],[205,328,213,307,1],[235,308,265,307,0],[240,275,253,265,0],[240,345,253,331,1],[290,350,292,331,0],[278,330,292,317,1],[310,330,315,318,0],[300,330,311,316,0],[305,345,310,322,1],[185,328,214,320,0],[165,258,168,214,0],[160,228,168,222,1],[210,240,221,229,1],[215,235,221,230,0],[188,228,190,221,0],[185,333,190,219,1],[218,270,219,235,1],[200,250,231,235,0],[215,320,232,307,1],[285,328,298,306,0],[275,310,290,304,0],[275,303,289,302,1],[265,303,270,301,0],[222,270,232,270,0]];
const EURJPY_LAST: Row5[] = [[485,525,508,512,1],[470,520,474,508,0],[450,515,474,508,1],[470,530,485,508,0],[473,523,485,509,1]];
const SAR: Pt[] = [[50,800],[67,819],[84,934],[101,931],[118,926],[135,917],[152,899],[169,883],[186,870],[203,846],[220,811],[237,763],[254,702],[271,632],[288,574],[305,528],[322,486],[339,437],[356,398],[373,363],[390,337],[407,315],[424,296],[441,282],[458,213],[475,206],[492,206],[509,206],[526,213],[543,222],[560,230],[577,235],[594,243],[611,352],[628,347],[645,341],[662,331],[679,321],[696,310],[713,160],[730,162],[747,166],[764,170],[781,173],[798,176],[815,179],[832,182],[849,187],[866,189],[883,192],[900,195],[917,200],[934,211],[951,227],[1070,576],[1087,576],[1104,574],[1121,571],[1138,562],[1155,550],[1341,347],[1358,355],[1376,361],[1393,368],[1410,377]];
const sEurjpy = scale(880, 2.39, 270);

function EurJpyChart() {
  const left = 900;
  const lines = rows(322.3, 10);
  const bars = [
    ...EURJPY.map((b, i): Bar => [50 + i * 17, ...b]),
    [1053, 480, 577, 480, 520, 1] as Bar,
    ...EURJPY_LAST.map((b, i): Bar => [1341 + i * 17.2, ...b]),
  ];
  return (
    <svg viewBox="898 306 628 301" className="block w-full bg-black" role="img" aria-label="EURJPYs H1">
      <Grid pane={{ left, top: 309, bottom: 589, lines }} />
      <PriceTag left={left} y={440} label="183.673" />
      <Candles bars={bars} s={sEurjpy} />
      <g fill="#ff9a1f">
        {SAR.map(([x, y]) => (
          <circle key={x} cx={sEurjpy.x(x)} cy={sEurjpy.y(y)} r="2" />
        ))}
      </g>
      <Caption left={left} y={315} name="EURJPYs,H1" values="183.755 183.796 183.620 183.673" />
      <AxisLabels
        left={left}
        ys={lines.filter((_, i) => i !== 4)}
        labels={["184.920", "184.605", "184.295", "183.980", "183.355", "183.040", "182.730", "182.415", "182.100"]}
      />
      <TimeLabels left={left} y={598} labels={["19 Dec 2025", "19 Dec 08:00", "19 Dec 16:00", "22 Dec 00:00", "22 Dec 08:00", "22 Dec 16:00", "23 Dec 00:00", "23 Dec 08:00", "23 Dec 16:00", "24 Dec 00:00", "24 Dec 08:00"]} />
    </svg>
  );
}

const AUDCAD_CLOSE: Pt[] = [[50,330],[58,325],[67,305],[80,290],[95,282],[105,255],[120,240],[135,240],[145,215],[155,190],[163,230],[172,215],[178,305],[190,330],[196,390],[210,455],[230,460],[240,480],[250,500],[255,545],[263,495],[275,475],[290,455],[300,465],[320,465],[332,495],[360,505],[370,540],[390,540],[402,555],[412,520],[425,500],[435,515],[445,495],[457,540],[462,520],[480,510],[500,485],[505,500],[509,400],[525,390],[540,415],[560,420],[570,440],[585,445],[597,445],[603,400],[615,392],[630,415],[645,430],[660,432],[672,440],[680,410],[693,440],[705,415],[722,405],[735,370],[750,350],[765,352],[775,385],[790,415],[803,395],[808,435],[820,455],[840,450],[845,380],[852,350],[862,395],[870,420],[880,405],[888,430],[897,400],[903,460],[910,525],[920,525],[935,545],[945,480],[955,500],[965,465],[980,460],[1000,455],[1005,510],[1015,470],[1035,460],[1050,480],[1060,510],[1075,505],[1090,460],[1105,470],[1125,500],[1137,480],[1160,475],[1175,510],[1195,520],[1210,520],[1215,580],[1225,590],[1240,555],[1250,580],[1267,575],[1272,630],[1282,600],[1300,578],[1310,605],[1330,610],[1345,600],[1355,610],[1372,590],[1390,580],[1398,600],[1405,575],[1415,610],[1425,590],[1435,625],[1444,615]];
const AUDCAD_SPIKES: Pt[] = [[178,168],[163,175],[518,380],[850,335],[1409,548],[985,432],[678,382],[250,568],[372,572],[398,600],[500,585],[662,495],[918,568],[934,575],[1222,605],[1440,640],[1274,645]];
const MACD: Pt[] = [[50,715],[75,722],[90,718],[120,695],[150,680],[178,683],[186,715],[194,750],[203,775],[220,835],[245,895],[262,917],[275,910],[300,885],[330,868],[360,875],[400,875],[430,845],[460,820],[500,785],[510,760],[525,725],[550,706],[580,722],[620,706],[680,725],[700,728],[730,715],[750,690],[765,690],[790,712],[815,740],[835,755],[850,735],[890,745],[905,770],[920,805],[935,828],[955,825],[1000,800],[1040,780],[1070,790],[1110,772],[1150,762],[1190,780],[1220,815],[1280,845],[1320,835],[1380,805],[1420,790],[1446,800]];
const MACD_SIGNAL: Pt[] = [[50,683],[75,700],[110,713],[140,708],[175,685],[205,705],[230,760],[250,830],[270,880],[285,895],[310,902],[340,885],[370,875],[410,875],[440,860],[470,835],[510,800],[540,765],[570,722],[590,713],[640,713],[690,718],[720,722],[750,712],[800,702],[820,712],[850,730],[880,742],[915,747],[930,768],[950,795],[980,813],[1010,812],[1040,792],[1090,788],[1130,783],[1160,768],[1200,770],[1230,790],[1260,815],[1290,833],[1340,838],[1380,825],[1410,810],[1446,797]];
const sAudcad = scale(880, 2.39, 600);

function AudCadChart() {
  const left = 900;
  const lines = rows(656, 6);
  return (
    <svg viewBox="898 645 628 285" className="block w-full bg-black" role="img" aria-label="AUDCADs H1 MACD">
      <Grid pane={{ left, top: 648, bottom: 816, lines }} />
      <Grid pane={{ left, top: 819, bottom: 911, lines: [850] }} ticks={false} />
      <PriceTag left={left} y={753} label="0.91846" />
      <Candles bars={denseBars(AUDCAD_CLOSE, 8.5, AUDCAD_SPIKES)} s={sAudcad} dense />
      <g stroke="#a9a9a9">
        {Array.from({ length: 164 }, (_, i) => {
          const u = 50 + i * 8.5;
          const x = Math.round(sAudcad.x(u)) + 0.5;
          return <path key={i} d={`M${x} 850.500V${sAudcad.y(lerp(MACD, u)).toFixed(1)}`} />;
        })}
      </g>
      <path d={pathOf(MACD_SIGNAL, sAudcad)} fill="none" stroke="#f00" strokeDasharray="3 2" />
      <path d="M901 905l4 5h-4z" fill="#8593a3" />
      <Caption left={left} y={655} name="AUDCADs,H1" values="0.91811 0.91862 0.91790 0.91846" />
      <text x="904" y="829" className={LABEL}>MACD(12,26,9) 0.000620 0.000524</text>
      <AxisLabels left={left} ys={lines} labels={["0.92580", "0.92355", "0.92135", "0.91910", "0.91690", "0.91470"]} />
      <AxisLabels left={left - 2} ys={[825, 850, 905]} labels={["0.000824", "0.00", "-0.001591"]} />
      <TimeLabels left={left} y={919} labels={["5 Dec 2025", "5 Dec 16:00", "8 Dec 08:00", "9 Dec 00:00", "9 Dec 16:00", "10 Dec 08:00", "11 Dec 00:00", "11 Dec 16:00", "12 Dec 08:00", "15 Dec 00:00", "15 Dec 16:00"]} />
    </svg>
  );
}

function WindowButton({ kind, active }: { kind: "最小化" | "最大化" | "閉じる"; active?: boolean }) {
  const red = active && kind === "閉じる";
  return (
    <button
      aria-label={kind}
      className={`flex h-4 w-7 items-center justify-center rounded-[2px] border ${
        red
          ? "border-[#6b2a22] bg-linear-to-b from-[#e0a195] via-[#cf5a43] to-[#c9472e]"
          : active
            ? "border-[#66809f] bg-linear-to-b from-[#c5d8ec] to-[#a3bfdb]"
            : "border-[#93a5b9] bg-linear-to-b from-[#d3dfeb] to-[#c8d6e4]"
      }`}
    >
      <svg viewBox="0 0 12 10" className="h-[10px] w-3" aria-hidden="true" fill="#fff" stroke="#556" strokeWidth="1">
        {kind === "最小化" && <rect x="1.500" y="5.500" width="9" height="3" />}
        {kind === "最大化" && (
          <>
            <rect x="1.500" y="1.500" width="9" height="7" />
            <rect x="4.500" y="4" width="3" height="2" fill="#8aa" />
          </>
        )}
        {kind === "閉じる" && (
          <path d="M1.500 1h3L6 3l1.500-2h3L7.800 5l2.700 4h-3L6 7 4.500 9h-3l2.700-4z" />
        )}
      </svg>
    </button>
  );
}

function ChartWindow({ title, active, children }: { title: string; active?: boolean; children: React.ReactNode }) {
  return (
    <section
      className={`min-w-0 rounded-t-[5px] border-t border-white px-2 pb-2 ${
        active ? "bg-[#b9d1ea] bg-linear-to-b from-[#98b4d2] to-[#b9d1ea] to-[28px]" : "bg-[#d7e4f2] bg-linear-to-b from-[#bfcddb] to-[#d7e4f2] to-[28px]"
      }`}
    >
      <header className="flex h-[27px] items-center gap-1 pt-[2px]">
        <Icon name="chartDoc" className="size-[14px] shrink-0" />
        <h2 className={`flex-1 text-[10px] leading-4 whitespace-nowrap ${active ? "text-[#2b2b2b]" : "text-[#9aa3ad]"}`}>{title}</h2>
        <div className="flex gap-[2px]">
          <WindowButton kind="最小化" active={active} />
          <WindowButton kind="最大化" active={active} />
          <WindowButton kind="閉じる" active={active} />
        </div>
      </header>
      {children}
    </section>
  );
}

/* ------------------------------------------------------------------ */
/* Market watch and navigator                                          */
/* ------------------------------------------------------------------ */

const QUOTES: [string, string, string, boolean][] = [
  ["USDCHFs", "0.78686", "0.78698", true],
  ["NZDUSDs", "0.58458", "0.58470", false],
  ["AUDUSDs", "0.67155", "0.67165", false],
  ["USDJPYs", "155.701", "155.714", false],
  ["USDCADs", "1.36769", "1.36784", false],
  ["AUDNZDs", "1.14862", "1.14880", false],
  ["AUDCHFs", "0.52839", "0.52856", false],
  ["AUDCADs", "0.91846", "0.91861", false],
  ["EURGBPs", "0.87265", "0.87277", false],
  ["EURCHFs", "0.92852", "0.92870", false],
  ["EURNZDs", "2.01830", "2.01857", false],
  ["EURCADs", "1.61389", "1.61406", false],
  ["EURAUDs", "1.75704", "1.75720", false],
  ["GBPCHFs", "1.06399", "1.06420", false],
  ["GBPAUDs", "2.01339", "2.01361", false],
  ["GBPCADs", "1.84936", "1.84958", false],
  ["CADCHFs", "0.57528", "0.57544", true],
  ["GBPNZDs", "2.31273", "2.31308", false],
  ["NZDCADs", "0.79952", "0.79971", false],
  ["NZDCHFs", "0.45998", "0.46016", false],
  ["CHFJPYs", "197.787", "197.817", false],
  ["NZDJPYs", "90.992", "91.011", true],
  ["EURJPYs", "183.673", "183.687", false],
  ["CADJPYs", "113.813", "113.826", true],
  ["GBPJPYs", "210.467", "210.492", false],
];

function MarketWatch() {
  return (
    <section className="relative">
      <div className="mr-[13px] flex h-[13px] items-center bg-linear-to-r from-[#c3d0de] to-[#d9e5f2] pl-2 text-[10px] leading-none text-[#222]">
        気配値表示: 08:56:29
      </div>
      <table className="h-[466px] w-[221px] table-fixed border-collapse bg-white text-[10px] leading-none">
        <colgroup>
          <col className="w-[96px]" />
          <col className="w-[62px]" />
          <col className="w-[63px]" />
        </colgroup>
        <thead>
          <tr className="h-[22px] text-[#333]">
            <th className="border-r border-[#ddd] pl-5 text-left font-normal">通貨ペア</th>
            <th className="border-r border-[#ddd] pr-1 text-right font-normal">Bid</th>
            <th className="pr-1 text-right font-normal">Ask</th>
          </tr>
        </thead>
        <tbody>
          {QUOTES.map(([symbol, bid, ask, up], i) => (
            <tr key={symbol} className={`border-b border-[#c9cdd0] ${i < 5 ? "bg-[#dfffff]" : "bg-[#b0dfe5]"}`}>
              <td className="border-r border-[#c9cdd0] pt-[2px]">
                <span className="flex items-center gap-1 pl-[5px] text-[#1f2a33]">
                  <svg viewBox="0 0 10 10" className="size-[10px]" aria-hidden="true">
                    {up ? (
                      <path d="M5 1l5 4.500H8V9H2V5.500H0z" fill="#23b02c" stroke="#0c6b14" strokeWidth=".8" />
                    ) : (
                      <path d="M5 9.500L10 5H8V1H2v4H0z" fill="#e8612d" stroke="#a8260d" strokeWidth=".8" />
                    )}
                  </svg>
                  {symbol}
                </span>
              </td>
              <td className={`border-r border-[#c9cdd0] pt-[2px] pr-[2px] text-right ${up ? "text-[#1c1cff]" : "text-[#e81c1c]"}`}>{bid}</td>
              <td className={`pt-[2px] pr-[3px] text-right ${up ? "text-[#1c1cff]" : "text-[#e81c1c]"}`}>{ask}</td>
            </tr>
          ))}
        </tbody>
      </table>
      <Highlight className="-top-2 right-1 -bottom-[5px] left-0" />
      <Badge n={5} className="top-px left-2" />
    </section>
  );
}

function Navigator() {
  const items: { label: string; icon?: string; size: string }[] = [
    { label: "FinTech", size: "text-[10px]" },
    { label: "取引口座", size: "text-[10px]" },
    { label: "インディケータ", icon: "folder", size: "text-[9px]" },
    { label: "エキスパートアドバイザ", icon: "advisor", size: "text-[9px]" },
    { label: "スクリプト", icon: "script", size: "text-[9px]" },
  ];
  return (
    <section className="relative flex flex-1 flex-col">
      <div className="mr-[13px] h-5 border-b border-[#b5c0cc] bg-linear-to-r from-[#c3d0de] to-[#d9e5f2]" />
      <ul className="mr-[13px] flex-1 bg-white text-[#222]">
        {items.map((it) => (
          <li key={it.label} className={`flex h-4 items-center gap-[6px] pl-[10px] ${it.size}`}>
            {it.icon ? (
              <>
                <svg viewBox="0 0 9 9" className="size-[9px] shrink-0" aria-hidden="true">
                  <rect x=".5" y=".5" width="8" height="8" fill="#fff" stroke="#999" />
                  <path d="M2 4.500h5M4.500 2v5" stroke="#333" />
                </svg>
                <Icon name={it.icon} className="size-[14px] shrink-0" />
              </>
            ) : (
              <Icon name="folder" className="size-[10px] shrink-0" />
            )}
            <span className="leading-none whitespace-nowrap">{it.label}</span>
          </li>
        ))}
      </ul>
      <Highlight className="top-0 right-1 -bottom-[5px] left-0" />
      <Badge n={6} className="top-2 left-2" />
    </section>
  );
}

/* ------------------------------------------------------------------ */
/* Terminal                                                            */
/* ------------------------------------------------------------------ */

const COLUMNS: { label: string; width: string }[] = [
  { label: "注文番号", width: "w-[148px]" },
  { label: "時間", width: "w-[207px]" },
  { label: "取引種別", width: "w-[104px]" },
  { label: "数量", width: "w-[82px]" },
  { label: "通貨ペア", width: "w-[103px]" },
  { label: "価格", width: "w-[116px]" },
  { label: "決済逆指値(S/L)", width: "w-[115px]" },
  { label: "決済指値(T/P)", width: "w-[116px]" },
  { label: "価格", width: "w-[115px]" },
  { label: "手数料", width: "w-[116px]" },
  { label: "スワップ", width: "w-[116px]" },
  { label: "損益", width: "w-auto" },
];

const TERMINAL_TABS: { label: string; width: string; count?: string }[] = [
  { label: "運用比率", width: "w-[61px] text-[10px]" },
  { label: "口座履歴", width: "w-[60px] text-[10px]" },
  { label: "ニュース", width: "w-[49px] text-[9px]" },
  { label: "アラーム設定", width: "w-[69px] text-[9px]" },
  { label: "メールボックス", width: "w-[78px] text-[9px]", count: "8" },
  { label: "マーケット", width: "w-[66px] text-[9px]", count: "93" },
  { label: "記事", width: "w-[39px] text-[10px]" },
  { label: "ライフラリ", width: "w-[56px] text-[9px]" },
  { label: "エキスパート", width: "w-[65px] text-[9px]" },
  { label: "操作履歴", width: "w-[60px] text-[10px]" },
];

function Terminal() {
  return (
    <section className="relative">
      <div className="flex bg-white pt-[7px]">
        <div className="w-[13px] shrink-0 border-r border-[#a8b4c2] bg-linear-to-r from-[#c3d0de] to-[#d9e5f2]" />
        <div className="min-w-0 flex-1 overflow-hidden pb-[87px]">
          <table className="w-full table-fixed border-collapse text-[10px] leading-none">
            <colgroup>
              {COLUMNS.map((c, i) => (
                <col key={i} className={c.width} />
              ))}
            </colgroup>
            <thead>
              <tr className="h-[21px] text-[#222]">
                {COLUMNS.map((c, i) => (
                  <th
                    key={i}
                    className={`pb-[2px] font-normal whitespace-nowrap ${
                      i === 0 ? "border-r border-[#e2e2e2] pl-1 text-left" : i === 11 ? "pr-2 text-right" : "border-r border-[#e2e2e2] pr-1 text-right"
                    }`}
                  >
                    {c.label}
                    {i === 0 && <span className="ml-4 text-[8px]">/</span>}
                  </th>
                ))}
              </tr>
            </thead>
            <tbody>
              <tr className="h-[18px] bg-[#c8c8c8] font-bold text-[#333]">
                <td colSpan={11} className="pl-[22px]">
                  <span className="flex items-center gap-[7px] whitespace-nowrap">
                    <span>残高: 1 500 000.00 USD</span>
                    <span>
                      <span className="text-[11px]">有効証拠金:</span> 1 500 000.00
                    </span>
                    <span>
                      <span className="text-[11px]">余剰証拠金:</span> 1 500 000.00
                    </span>
                  </span>
                </td>
                <td className="pr-[6px] text-right">0.00</td>
              </tr>
            </tbody>
          </table>
        </div>
      </div>
      <Highlight className="top-[2px] right-0 -bottom-px left-0" />
      <Badge n={9} className="top-[11px] left-2" />
    </section>
  );
}

function TerminalTabs() {
  return (
    <div className="flex h-[21px] items-start border-b-2 border-[#c4c4c4] bg-[#f0f0f0] text-[10px] leading-none">
      <div className="flex h-[17px] w-[10px] items-end justify-center bg-[#c3d0de] text-[8px]">ﾅﾙ</div>
      <button className="ml-[5px] flex h-[17px] w-[39px] items-center justify-center border-r border-b border-l border-[#333] bg-white leading-none">取引</button>
      {TERMINAL_TABS.map((t) => (
        <button key={t.label} className={`flex h-4 shrink-0 items-center pl-2 leading-none text-[#777] ${t.width}`}>
          <span className="flex-1 text-left whitespace-nowrap">
            {t.label}
            {t.count && <sub className="ml-px text-[8px] leading-none text-[#ee2222]">{t.count}</sub>}
          </span>
          <span className="h-3 w-px bg-[#777]" />
        </button>
      ))}
    </div>
  );
}

function StatusBar() {
  return (
    <footer className="relative flex h-[41px] items-start bg-[#f0f0f0] pt-1 text-[10px] leading-none text-[#222]">
      <span className="flex h-4 flex-1 items-center text-[9px]">F1キーでヘルプが表示されます</span>
      <div className="flex h-4 items-center">
        <span className="flex h-4 w-[103px] items-center border-l border-[#aaa] pl-1">Default</span>
        <span className="h-4 w-[90px] border-l border-[#aaa]" />
        <span className="h-4 w-[63px] border-l border-[#aaa]" />
        <span className="h-4 w-[63px] border-l border-[#aaa]" />
        <span className="h-4 w-[61px] border-l border-[#aaa]" />
        <span className="h-4 w-[62px] border-l border-[#aaa]" />
        <span className="h-4 w-[58px] border-l border-[#aaa]" />
        <span className="flex h-4 w-[113px] items-center gap-1 border-l border-[#aaa] pl-1">
          <svg viewBox="0 0 21 12" className="h-3 w-[21px]" aria-hidden="true">
            {[0, 1, 2, 3, 4, 5, 6].map((i) => (
              <g key={i}>
                <rect x={i * 3} y="0" width="2" height="12" fill="#6c9a2c" />
                <rect x={i * 3} y={9 - i} width="2" height={3 + i} fill="#1c4b86" />
              </g>
            ))}
          </svg>
          1846/2 kb
        </span>
      </div>
      <Highlight className="-top-3 right-[19px] bottom-[3px] w-[606px]" />
      <Badge n={10} className="-top-[13px] right-[628px]" />
    </footer>
  );
}

/* ------------------------------------------------------------------ */
/* Page                                                                */
/* ------------------------------------------------------------------ */

export default function App() {
  return (
    <main className="relative bg-white pt-[3px] font-['Open_Sans','Noto_Sans_CJK_JP',sans-serif] [font-feature-settings:'palt']">
      <section className="mr-[7px] ml-[43px] rounded-[7px] border-[6px] border-[#003180] bg-white p-[3px]">
        <div className="overflow-hidden bg-[#f0f0f0]">
          <MenuBar size="lg" />
          <ToolBars size="lg" />
        </div>
      </section>
      <Badge n={1} className="top-2 left-[10px]" />
      <Badge n={2} className="top-[72px] left-[10px]" />

      <div className="mt-[49px] overflow-hidden rounded-[24px] border-2 border-[#003180] bg-[#f0f0f0]">
        <MenuBar size="sm" />
        <ToolBars size="sm">
          <div className="ml-auto flex items-center gap-2 pr-[3px]">
            <button aria-label="検索">
              <SearchIcon className="size-[13px]" />
            </button>
            <button aria-label="通知">
              <ChatIcon className="h-5 w-[22px]" />
            </button>
          </div>
        </ToolBars>

        <div className="flex">
          <aside className="flex w-[233px] shrink-0 flex-col">
            <MarketWatch />
            <div className="mt-[5px] flex h-[18px] items-center border-t border-[#777] pb-[2px] pl-[3px] text-[10px] leading-none">
              <button className="flex h-[14px] w-[79px] items-center border-r border-l border-[#555] pl-2 leading-none whitespace-nowrap text-[#222]">通貨ペアリスト</button>
              <button className="flex h-[14px] w-[77px] items-center border-r border-[#555] pl-2 text-[9px] leading-none whitespace-nowrap text-[#888]">ティックチャート</button>
            </div>
            <Navigator />
            <div className="mt-[5px] flex h-[22px] items-start pl-[3px] text-[10px] leading-none">
              <button className="flex h-5 w-10 items-center justify-center border-r-2 border-b-2 border-l border-[#444] bg-white leading-none">全般</button>
              <button className="flex h-5 w-[64px] items-center pl-2 leading-none text-[#888]">
                <span className="flex-1 text-left whitespace-nowrap">お気に入り</span>
                <span className="h-3 w-px bg-[#777]" />
              </button>
            </div>
          </aside>
          <div className="w-2 shrink-0 border-r-2 border-[#777] text-[8px] leading-none text-[#222]">
            <button aria-label="閉じる" className="leading-none">
              ×
            </button>
          </div>
          <div className="min-w-0 flex-1">
            <div className="grid grid-cols-2 gap-[2px] bg-[#8c9299] pt-px pl-px">
              <ChartWindow title="EURUSDs,H1" active>
                <EurUsdChart />
              </ChartWindow>
              <ChartWindow title="EURJPYs,H1">
                <EurJpyChart />
              </ChartWindow>
              <ChartWindow title="USDJPYs,M30">
                <UsdJpyChart />
              </ChartWindow>
              <div className="relative min-w-0">
                <ChartWindow title="AUDCADs,H1">
                  <AudCadChart />
                </ChartWindow>
                <div className="pointer-events-none absolute -top-[10px] right-0 -bottom-[9px] -left-[11px] z-20 rounded-[6px] border-[6px] border-[#003180] shadow-[0_0_0_5px_#fff,inset_0_0_0_5px_#fff]" />
                <Badge n={7} className="top-px left-0" />
              </div>
            </div>
            <div className="relative h-[35px] border-t-2 border-[#999] pl-1">
              <div className="flex h-[18px] text-[10px] leading-none">
                <button className="h-full w-[78px] border-r-2 border-b-2 border-l border-[#333] bg-white leading-none">EURUSDs,H1</button>
                <button className="my-[3px] w-[83px] border-r border-[#888] leading-none text-[#888]">USDJPYs,M30</button>
                <button className="my-[3px] w-[75px] border-r border-[#888] leading-none text-[#888]">EURJPYs,H1</button>
                <button className="my-[3px] w-[82px] border-r border-[#888] leading-none text-[#888]">AUDCADs,H1</button>
              </div>
              <Highlight className="-top-[11px] -left-[6px] h-10 w-[340px]" />
              <Badge n={8} className="-top-[66px] -left-[5px]" />
            </div>
          </div>
        </div>

        <Terminal />
        <TerminalTabs />
        <StatusBar />
      </div>

      <svg viewBox="686 156 160 114" aria-hidden="true" className="pointer-events-none absolute top-[156px] left-[686px] z-30 h-[114px] w-[160px]">
        <path
          d="M691 261Q780 258 808 197L796 191 834 163 838 209 824 203Q790 268 691 263z"
          fill="#003180"
          stroke="#fff"
          strokeWidth="7"
          strokeLinejoin="round"
          paintOrder="stroke"
        />
      </svg>
      <svg viewBox="1320 230 164 116" aria-hidden="true" className="pointer-events-none absolute top-[230px] right-[52px] z-30 h-[116px] w-[164px]">
        <path
          d="M1476 238.500Q1372 240 1339 297L1326 292 1332 340 1372 309 1357 304Q1378 250 1476 240.500z"
          fill="#003180"
          stroke="#fff"
          strokeWidth="7"
          strokeLinejoin="round"
          paintOrder="stroke"
        />
      </svg>

      <div className="absolute top-[350px] right-[103px] z-20 flex h-24 w-[200px] items-center gap-[38px] rounded-[7px] border-[6px] border-[#003180] bg-[#f0f0f0] pl-6 shadow-[0_0_0_3px_#fff,inset_0_0_0_4px_#fff]">
        <SearchIcon className="size-11 shrink-0" />
        <ChatIcon className="h-[70px] w-[76px] shrink-0" />
        <Badge n={3} className="top-[81px] left-[13px]" />
        <Badge n={4} className="top-[81px] left-[123px]" />
      </div>
    </main>
  );
}
